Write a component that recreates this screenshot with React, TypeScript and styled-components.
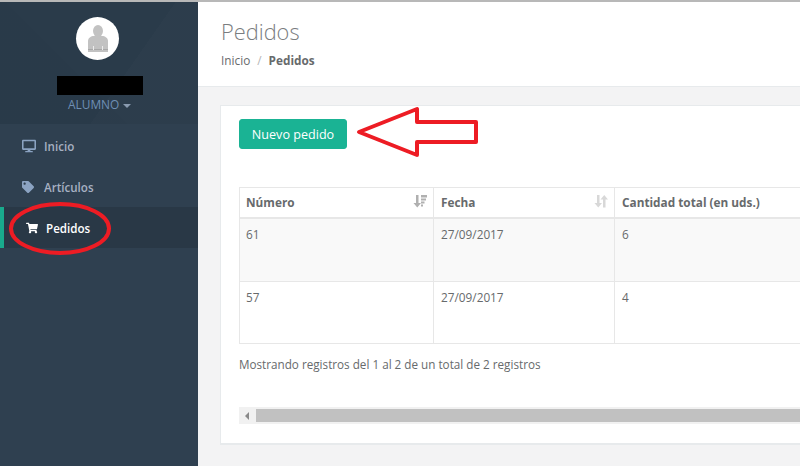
import React from 'react';
import styled, { createGlobalStyle } from 'styled-components';
import { FaDesktop, FaTag, FaShoppingCart } from 'react-icons/fa';

const GlobalStyle = createGlobalStyle`
  html, body {
    margin: 0;
    padding: 0;
    height: 466px;
    overflow: hidden;
    background: #f3f3f4;
    font-family: "Open Sans", "Liberation Sans", sans-serif;
    font-size: 13px;
    color: #676a6c;
  }
  * {
    box-sizing: border-box;
  }
`;

const Layout = styled.div`
  position: relative;
  display: flex;
  width: 800px;
  height: 466px;
  overflow: hidden;
  border-top: 2px solid #b8b8b8;
`;

const Sidebar = styled.nav`
  flex: 0 0 198px;
  background: #2f4050;
`;

const Profile = styled.div`
  display: flex;
  flex-direction: column;
  align-items: flex-start;
  height: 122px;
  padding-top: 15px;
  background:
    linear-gradient(125deg, transparent 62%, rgba(255, 255, 255, 0.012) 62%),
    linear-gradient(45deg, rgba(0, 0, 0, 0.02) 40%, transparent 40%),
    #2a3b4a;
`;

const Avatar = styled.div`
  display: flex;
  align-items: center;
  justify-content: center;
  width: 43px;
  height: 43px;
  margin-left: 76px;
  border-radius: 50%;
  background: #fff;
`;

const HiddenName = styled.div`
  width: 86px;
  height: 19px;
  margin: 16px 0 0 57px;
  background: #000;
`;

const RoleLabel = styled.div`
  display: flex;
  align-items: center;
  gap: 4px;
  margin: 1px 0 0 68px;
  font-size: 11.9px;
  line-height: 17px;
  color: #6f8fb5;
`;

const Caret = styled.span`
  width: 0;
  height: 0;
  margin-top: 2px;
  border-left: 4px solid transparent;
  border-right: 4px solid transparent;
  border-top: 4px solid #8a9bb0;
`;

const NavList = styled.ul`
  list-style: none;
  margin: 0;
  padding: 1px 0 0;
`;

const NavItem = styled.li<{ $active?: boolean }>`
  display: flex;
  align-items: center;
  height: 41px;
  padding: 1px 0 0 22px;
  border-left: ${(p) => (p.$active ? '4px solid #19aa8d' : '0')};
  background: ${(p) => (p.$active ? '#293846' : 'transparent')};
  color: ${(p) => (p.$active ? '#fff' : '#a7b1c2')};
  font-size: 11.6px;
  font-weight: 600;
`;

const NavIcon = styled.span<{ $w: number; $size: number; $active?: boolean }>`
  display: flex;
  align-items: center;
  flex: 0 0 ${(p) => p.$w}px;
  color: ${(p) => (p.$active ? '#fff' : '#8ba3c2')};

  svg {
    width: ${(p) => p.$size}px;
    height: ${(p) => p.$size}px;
  }
`;

const Main = styled.main`
  flex: 1 1 auto;
  min-width: 0;
`;

const PageHeading = styled.header`
  height: 85px;
  padding: 16px 23px 0;
  background: #fff;
  border-bottom: 1px solid #e7eaec;
`;

const Title = styled.h2`
  margin: 0;
  font-size: 21.8px;
  font-weight: 300;
  line-height: 27px;
  color: #7a7d80;
`;

const Breadcrumb = styled.div`
  display: flex;
  gap: 7px;
  margin-top: 7px;
  font-size: 11.8px;
  line-height: 17px;

  strong {
    font-weight: 700;
  }
`;

const Separator = styled.span`
  color: #b5b5b5;
`;

const Panel = styled.section`
  width: 640px;
  height: 340px;
  margin: 18px 0 0 22px;
  padding: 13px 18px 0;
  background: #fff;
  border: 1px solid #e7eaec;
  border-width: 1px 1px 2px;
`;

const PrimaryButton = styled.button`
  display: block;
  width: 108px;
  height: 30px;
  padding: 0;
  border: 1px solid #1ab394;
  border-radius: 3px;
  background: #1ab394;
  color: #fff;
  font-family: inherit;
  font-size: 12.6px;
`;

const TableFrame = styled.table`
  width: 600px;
  margin-top: 38px;
  border-collapse: collapse;
  table-layout: fixed;
`;

const HeadCell = styled.th<{ $w: number }>`
  position: relative;
  width: ${(p) => p.$w}px;
  height: 30px;
  padding: 0 7px;
  border: 1px solid #e7e7e7;
  border-bottom-width: 2px;
  font-size: 11.8px;
  font-weight: 700;
  text-align: left;
  color: #676a6c;

  &:first-child {
    padding-left: 6px;
  }
`;

const SortIcon = styled.svg`
  position: absolute;
  right: 6px;
  top: 6px;
  width: 14px;
  height: 14px;
`;

const BodyRow = styled.tr<{ $striped?: boolean; $h: number }>`
  height: ${(p) => p.$h}px;
  background: ${(p) => (p.$striped ? '#f9f9f9' : '#fff')};
`;

const BodyCell = styled.td`
  padding: 7px 7px;
  border: 1px solid #e7e7e7;
  vertical-align: top;
  font-size: 11.8px;
  line-height: 17px;

  &:first-child {
    padding-left: 6px;
  }
`;

const TableInfo = styled.div`
  margin-top: 12px;
  font-size: 11.7px;
  line-height: 17px;
`;

const ScrollBar = styled.div`
  display: flex;
  align-items: center;
  width: 600px;
  height: 17px;
  margin-top: 34px;
  background: #f1f1f1;
`;

const ScrollArrow = styled.div`
  display: flex;
  align-items: center;
  flex: 0 0 17px;
  padding-left: 6px;

  &::before {
    content: '';
    border-top: 4px solid transparent;
    border-bottom: 4px solid transparent;
    border-right: 4px solid #8a8a8a;
  }
`;

const ScrollThumb = styled.div`
  flex: 1;
  height: 13px;
  background: #c1c1c1;
`;

const Annotations = styled.svg`
  position: absolute;
  left: 0;
  top: -2px;
  width: 800px;
  height: 466px;
  pointer-events: none;
`;

function App() {
  return (
    <>
      <GlobalStyle />
      <Layout>
        <Sidebar>
          <Profile>
            <Avatar>
              <svg width="20" height="27" viewBox="0 0 20 27">
                <ellipse cx="10" cy="6" rx="5" ry="6" fill="#c2c2c2" />
                <path d="M0 27V16c0-3 3-5 6-5h8c3 0 6 2 6 5v11z" fill="#c2c2c2" />
                <rect y="24" width="20" height="1" fill="#a8a8a8" />
                <rect x="5" y="21" width="1" height="4" fill="#ececec" />
                <rect x="14" y="21" width="1" height="4" fill="#ececec" />
              </svg>
            </Avatar>
            <HiddenName />
            <RoleLabel>
              ALUMNO
              <Caret />
            </RoleLabel>
          </Profile>
          <NavList>
            <NavItem>
              <NavIcon $w={22} $size={14}>
                <FaDesktop />
              </NavIcon>
              Inicio
            </NavItem>
            <NavItem>
              <NavIcon $w={22} $size={12}>
                <FaTag />
              </NavIcon>
              Artículos
            </NavItem>
            <NavItem $active>
              <NavIcon $w={20} $size={12} $active>
                <FaShoppingCart />
              </NavIcon>
              Pedidos
            </NavItem>
          </NavList>
        </Sidebar>
        <Main>
          <PageHeading>
            <Title>Pedidos</Title>
            <Breadcrumb>
              <span>Inicio</span>
              <Separator>/</Separator>
              <strong>Pedidos</strong>
            </Breadcrumb>
          </PageHeading>
          <Panel>
            <PrimaryButton>Nuevo pedido</PrimaryButton>
            <TableFrame>
              <thead>
                <tr>
                  <HeadCell $w={194}>
                    Número
                    <SortIcon viewBox="0 0 14 14" fill="#b0b0b0">
                      <path d="M3 1h2.500v8H8l-3.750 4.500L.5 9H3z" />
                      <path d="M8 1h6v2.500H8zM8 4.500h5v2H8zM8 7.500h3.500v2H8zM8 10.500h2v2H8z" />
                    </SortIcon>
                  </HeadCell>
                  <HeadCell $w={181}>
                    Fecha
                    <SortIcon viewBox="0 0 14 14" fill="#d8d8d8">
                      <path d="M3 1h2.500v8H8l-3.750 4.500L.5 9H3z" />
                      <path d="M9 13.500h2.500v-8H14L10.250 1 6.500 5.500H9z" />
                    </SortIcon>
                  </HeadCell>
                  <HeadCell $w={225}>Cantidad total (en uds.)</HeadCell>
                </tr>
              </thead>
              <tbody>
                <BodyRow $striped $h={64}>
                  <BodyCell>61</BodyCell>
                  <BodyCell>27/09/2017</BodyCell>
                  <BodyCell>6</BodyCell>
                </BodyRow>
                <BodyRow $h={62}>
                  <BodyCell>57</BodyCell>
                  <BodyCell>27/09/2017</BodyCell>
                  <BodyCell>4</BodyCell>
                </BodyRow>
              </tbody>
            </TableFrame>
            <TableInfo>Mostrando registros del 1 al 2 de un total de 2 registros</TableInfo>
            <ScrollBar>
              <ScrollArrow />
              <ScrollThumb />
            </ScrollBar>
          </Panel>
        </Main>
        <Annotations viewBox="0 0 800 466" fill="none" stroke="#ed1c24" strokeWidth="4">
          <ellipse cx="60" cy="228.500" rx="49" ry="24.500" />
          <path d="M359 132L417 109V122H476V142H417V155Z" strokeLinejoin="round" />
        </Annotations>
      </Layout>
    </>
  );
}

export default App;
